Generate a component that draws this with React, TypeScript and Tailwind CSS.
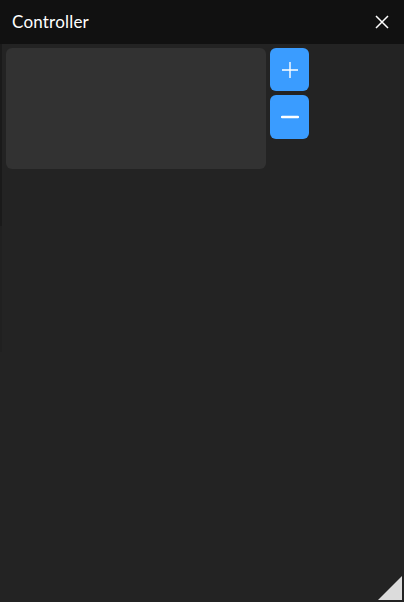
import React from "react";

export default function App() {
  return (
    <div className="w-[404px] h-[602px] bg-[#232323] flex flex-col relative overflow-hidden" style={{ fontFamily: "Lato, 'Open Sans', sans-serif" }}>
      <div className="h-[44px] bg-[#111111] flex items-center justify-between pl-[12px] pr-[15px] shrink-0">
        <span className="text-white text-[17px] tracking-[0.2px]">Controller</span>
        <svg width="14" height="14" viewBox="0 0 14 14" className="block">
          <path d="M1 1 L13 13 M13 1 L1 13" stroke="#ffffff" strokeWidth="1.5" />
        </svg>
      </div>
      <div className="flex-1 flex">
        <div className="w-[2px] flex flex-col">
          <div className="h-[182px] bg-[#1a1a1a]" />
          <div className="h-[126px] bg-[#202020]" />
        </div>
        <div className="flex-1 flex items-start gap-[4px] pl-[4px] pt-[4px]">
          <div className="w-[260px] h-[121px] rounded-[6px] bg-[#323232]" />
          <div className="flex flex-col gap-[4px]">
            <button className="w-[39px] h-[43px] rounded-[6px] bg-[#3a9cff] flex items-center justify-center">
              <svg width="18" height="18" viewBox="0 0 18 18">
                <path d="M9 1 V17 M1 9 H17" stroke="#ffffff" strokeWidth="1.4" />
              </svg>
            </button>
            <button className="w-[39px] h-[44px] rounded-[6px] bg-[#3a9cff] flex items-center justify-center">
              <svg width="18" height="18" viewBox="0 0 18 18">
                <path d="M1 9 H17" stroke="#ffffff" strokeWidth="2.4" strokeLinecap="round" />
              </svg>
            </button>
          </div>
        </div>
      </div>
      <svg width="24" height="24" viewBox="0 0 24 24" className="absolute right-[2px] bottom-[2px]">
        <polygon points="24,0 24,24 0,24" fill="#dcdcdc" />
      </svg>
    </div>
  );
}
